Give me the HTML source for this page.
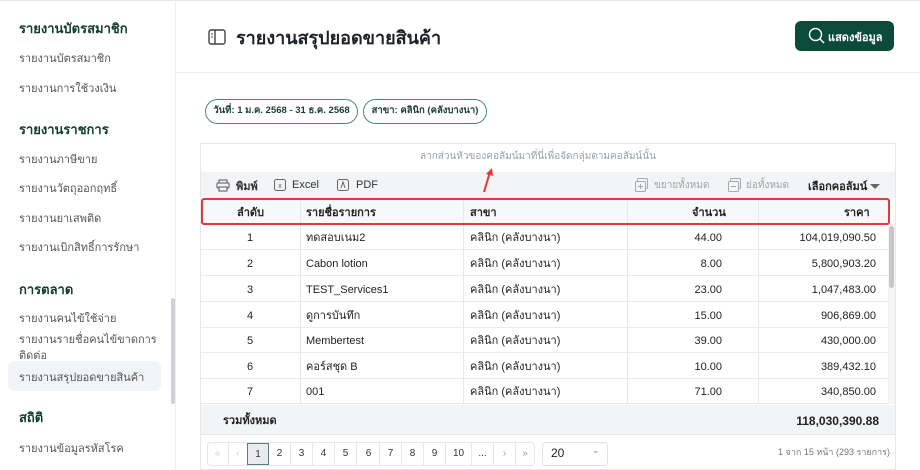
<!DOCTYPE html>
<html><head><meta charset="utf-8"><style>
*{box-sizing:border-box;margin:0;padding:0}
body{width:920px;height:470px;overflow:hidden;background:#fff;font-family:"Liberation Sans","Noto Sans CJK SC",sans-serif;color:#222;position:relative}
.a{position:absolute;white-space:nowrap}
.sh{font-size:13px;font-weight:bold;color:#0f3d2e}
.si{font-size:11px;color:#555}
.row{position:absolute;left:200px;width:688px;height:26px;border-bottom:1px solid #e8eaed;font-size:11px}
.row div{position:absolute;top:8px}
.row div.t{top:4px}
.vl{position:absolute;top:198px;height:206px;width:1px;background:#e6e8eb}
.pg{position:absolute;top:443px;height:22px;width:22px;border-right:1px solid #e5e7ea;font-size:10px;text-align:center;line-height:22px;color:#333}
</style></head><body>
<div class="a" style="left:0;top:0;width:920px;height:1px;background:#e5e7ea"></div>
<div class="a" style="left:175px;top:0;width:1px;height:470px;background:#eceef0"></div>
<div class="a sh" style="left:19px;top:18px">รายงานบัตรสมาชิก</div>
<div class="a si" style="left:19px;top:49px">รายงานบัตรสมาชิก</div>
<div class="a si" style="left:19px;top:79px">รายงานการใช้วงเงิน</div>
<div class="a sh" style="left:19px;top:119px">รายงานราชการ</div>
<div class="a si" style="left:19px;top:150px">รายงานภาษีขาย</div>
<div class="a si" style="left:19px;top:179px">รายงานวัตถุออกฤทธิ์</div>
<div class="a si" style="left:19px;top:209px">รายงานยาเสพติด</div>
<div class="a si" style="left:19px;top:238px">รายงานเบิกสิทธิ์การรักษา</div>
<div class="a sh" style="left:19px;top:279px">การตลาด</div>
<div class="a si" style="left:19px;top:309px">รายงานคนไข้ใช้จ่าย</div>
<div class="a si" style="left:19px;top:330px">รายงานรายชื่อคนไข้ขาดการ</div>
<div class="a si" style="left:19px;top:346px">ติดต่อ</div>
<div class="a" style="left:8px;top:361px;width:153px;height:30px;background:#f1f3f6;border-radius:6px"></div>
<div class="a si" style="left:19px;top:368px">รายงานสรุปยอดขายสินค้า</div>
<div class="a sh" style="left:19px;top:407px">สถิติ</div>
<div class="a si" style="left:19px;top:439px">รายงานข้อมูลรหัสโรค</div>
<div class="a" style="left:171px;top:298px;width:4px;height:106px;background:#cfd2d6;border-radius:2px"></div>
<div class="a" style="left:176px;top:72px;width:744px;height:1px;background:#eceef0"></div>
<svg class="a" style="left:208px;top:29px" width="18" height="16" viewBox="0 0 18 16"><rect x="1" y="1" width="16" height="14" rx="2" fill="none" stroke="#444" stroke-width="1.4"/><line x1="7" y1="1" x2="7" y2="15" stroke="#444" stroke-width="1.4"/><line x1="3" y1="5" x2="5" y2="5" stroke="#444"/><line x1="3" y1="8" x2="5" y2="8" stroke="#444"/></svg>
<div class="a" style="left:236px;top:23px;font-size:18px;font-weight:bold;color:#1f2328">รายงานสรุปยอดขายสินค้า</div>
<div class="a" style="left:795px;top:21px;width:99px;height:30px;background:#0c4a3a;border-radius:6px"></div>
<svg class="a" style="left:808px;top:27px" width="18" height="18" viewBox="0 0 18 18"><circle cx="7.5" cy="7.5" r="6" fill="none" stroke="#fff" stroke-width="1.4"/><line x1="12" y1="12" x2="16" y2="16" stroke="#fff" stroke-width="1.4"/></svg>
<div class="a" style="left:828px;top:28px;font-size:11px;font-weight:bold;color:#fff">แสดงข้อมูล</div>
<div class="a" style="left:205px;top:99px;width:153px;height:25px;border:1.3px solid #4a8a78;border-radius:13px;font-size:9.5px;font-weight:bold;color:#1d3d33;text-align:center;line-height:22px">วันที่: 1 ม.ค. 2568 - 31 ธ.ค. 2568</div>
<div class="a" style="left:363px;top:99px;width:124px;height:25px;border:1.3px solid #4a8a78;border-radius:13px;font-size:9.5px;font-weight:bold;color:#1d3d33;text-align:center;line-height:22px">สาขา: คลินิก (คลังบางนา)</div>
<div class="a" style="left:200px;top:143px;width:696px;height:327px;border:1px solid #e5e7ea;background:#fff"></div>
<div class="a" style="left:420px;top:149px;font-size:10px;color:#9aa0a6">ลากส่วนหัวของคอลัมน์มาที่นี่เพื่อจัดกลุ่มตามคอลัมน์นั้น</div>
<div class="a" style="left:201px;top:172px;width:694px;height:26px;background:#f3f4f6"></div>
<svg class="a" style="left:480px;top:166px" width="16" height="28" viewBox="0 0 16 28"><line x1="4" y1="26" x2="10" y2="6" stroke="#e53935" stroke-width="2"/><path d="M6 8 L12 2 L13 10 Z" fill="#e53935"/></svg>
<svg class="a" style="left:216px;top:179px" width="14" height="13" viewBox="0 0 14 13"><rect x="3" y="1" width="8" height="3" fill="none" stroke="#555"/><rect x="1" y="4" width="12" height="5" rx="1" fill="none" stroke="#555"/><rect x="3" y="8" width="8" height="4" fill="#f3f4f6" stroke="#555"/></svg>
<div class="a" style="left:236px;top:177px;font-size:11px;font-weight:bold;color:#333">พิมพ์</div>
<svg class="a" style="left:274px;top:179px" width="12" height="12"><rect x="0.5" y="0.5" width="11" height="11" rx="2" fill="none" stroke="#666"/><text x="6" y="9" font-size="7" text-anchor="middle" fill="#666" font-family="Liberation Sans">x</text></svg>
<div class="a" style="left:292px;top:179px;font-size:11px;color:#333">Excel</div>
<svg class="a" style="left:337px;top:179px" width="12" height="12"><rect x="0.5" y="0.5" width="11" height="11" rx="2" fill="none" stroke="#666"/><path d="M4 9 L6 3 L8 9" fill="none" stroke="#666"/></svg>
<div class="a" style="left:356px;top:179px;font-size:11px;color:#333">PDF</div>
<svg class="a" style="left:635px;top:178px" width="13" height="14"><rect x="2.5" y="0.5" width="10" height="10" rx="1" fill="none" stroke="#aaa"/><rect x="0.5" y="3.5" width="10" height="10" rx="1" fill="#f3f4f6" stroke="#aaa"/><path d="M3 8.5 h5 M5.5 6 v5" stroke="#aaa"/></svg>
<div class="a" style="left:654px;top:178px;font-size:10px;color:#a0a4a8">ขยายทั้งหมด</div>
<svg class="a" style="left:728px;top:178px" width="13" height="14"><rect x="2.5" y="0.5" width="10" height="10" rx="1" fill="none" stroke="#aaa"/><rect x="0.5" y="3.5" width="10" height="10" rx="1" fill="#f3f4f6" stroke="#aaa"/><path d="M3 8.5 h5" stroke="#aaa"/></svg>
<div class="a" style="left:746px;top:178px;font-size:10px;color:#a0a4a8">ย่อทั้งหมด</div>
<div class="a" style="left:808px;top:177px;font-size:11px;font-weight:bold;color:#222">เลือกคอลัมน์</div>
<div class="a" style="left:870px;top:184px;width:0;height:0;border-left:5px solid transparent;border-right:5px solid transparent;border-top:5px solid #666"></div>
<div class="a" style="left:201px;top:198px;width:687px;height:26px;background:#f7f8fa;border-bottom:1px solid #e5e7ea"></div>
<div class="a" style="left:237px;top:203px;font-size:11px;font-weight:bold">ลำดับ</div>
<div class="a" style="left:306px;top:203px;font-size:11px;font-weight:bold">รายชื่อรายการ</div>
<div class="a" style="left:470px;top:203px;font-size:11px;font-weight:bold">สาขา</div>
<div class="a" style="left:692px;top:203px;font-size:11px;font-weight:bold">จำนวน</div>
<div class="a" style="left:844px;top:203px;font-size:11px;font-weight:bold">ราคา</div>
<div class="vl" style="left:300px"></div><div class="vl" style="left:463px"></div><div class="vl" style="left:627px"></div><div class="vl" style="left:758px"></div>
<div class="row" style="top:224px"><div style="left:47px">1</div><div class="t" style="left:106px">ทดสอบเนม2</div><div class="t" style="left:270px">คลินิก (คลังบางนา)</div><div style="right:166px">44.00</div><div style="right:12px">104,019,090.50</div></div>
<div class="row" style="top:250px"><div style="left:47px">2</div><div style="left:106px">Cabon lotion</div><div class="t" style="left:270px">คลินิก (คลังบางนา)</div><div style="right:166px">8.00</div><div style="right:12px">5,800,903.20</div></div>
<div class="row" style="top:276px"><div style="left:47px">3</div><div style="left:106px">TEST_Services1</div><div class="t" style="left:270px">คลินิก (คลังบางนา)</div><div style="right:166px">23.00</div><div style="right:12px">1,047,483.00</div></div>
<div class="row" style="top:302px"><div style="left:47px">4</div><div class="t" style="left:106px">ดูการบันทึก</div><div class="t" style="left:270px">คลินิก (คลังบางนา)</div><div style="right:166px">15.00</div><div style="right:12px">906,869.00</div></div>
<div class="row" style="top:327px"><div style="left:47px">5</div><div style="left:106px">Membertest</div><div class="t" style="left:270px">คลินิก (คลังบางนา)</div><div style="right:166px">39.00</div><div style="right:12px">430,000.00</div></div>
<div class="row" style="top:353px"><div style="left:47px">6</div><div class="t" style="left:106px">คอร์สชุด B</div><div class="t" style="left:270px">คลินิก (คลังบางนา)</div><div style="right:166px">10.00</div><div style="right:12px">389,432.10</div></div>
<div class="row" style="top:378px"><div style="left:47px">7</div><div style="left:106px">001</div><div class="t" style="left:270px">คลินิก (คลังบางนา)</div><div style="right:166px">71.00</div><div style="right:12px">340,850.00</div></div>
<div class="a" style="left:888px;top:224px;width:7px;height:180px;background:#f5f5f5"></div>
<div class="a" style="left:889px;top:226px;width:5px;height:62px;background:#c4c6c9;border-radius:3px"></div>
<div class="a" style="left:201px;top:198px;width:689px;height:27px;border:2px solid #e5373f;border-radius:3px"></div>
<div class="a" style="left:201px;top:405px;width:694px;height:30px;background:#f3f4f6;border-bottom:1px solid #e5e7ea"></div>
<div class="a" style="left:223px;top:411px;font-size:11px;font-weight:bold">รวมทั้งหมด</div>
<div class="a" style="right:41px;top:414px;font-size:12px;font-weight:bold">118,030,390.88</div>
<div class="a" style="left:207px;top:442px;width:328px;height:24px;border:1px solid #e5e7ea;border-radius:4px"></div>
<div class="pg" style="left:207px;color:#ccc">«</div>
<div class="pg" style="left:227px;color:#ccc">‹</div>
<div class="pg" style="left:247px;background:#e8eaed;border:1.5px solid #5b7e74">1</div>
<div class="pg" style="left:269px">2</div><div class="pg" style="left:291px">3</div><div class="pg" style="left:313px">4</div><div class="pg" style="left:335px">5</div><div class="pg" style="left:358px">6</div><div class="pg" style="left:380px">7</div><div class="pg" style="left:402px">8</div><div class="pg" style="left:424px">9</div><div class="pg" style="left:446px;width:26px">10</div><div class="pg" style="left:472px">...</div><div class="pg" style="left:494px;color:#999">›</div><div class="pg" style="left:514px;color:#999;border:none">»</div>
<div class="a" style="left:542px;top:442px;width:66px;height:24px;border:1px solid #e0e2e5;border-radius:4px"></div>
<div class="a" style="left:551px;top:446px;font-size:12px">20</div>
<div class="a" style="left:592px;top:445px;font-size:9px;color:#888">⌄</div>
<div class="a" style="right:30px;top:445px;font-size:9px;color:#777">1 จาก 15 หน้า (293 รายการ)</div>
</body></html>
